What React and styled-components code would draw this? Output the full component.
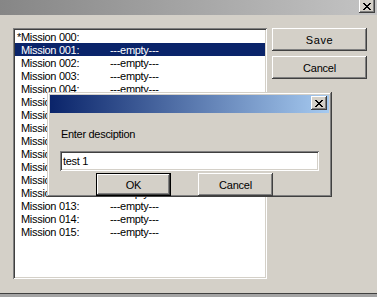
import React from 'react';
import styled, { createGlobalStyle } from 'styled-components';

const GlobalStyle = createGlobalStyle`
  html, body {
    margin: 0;
    padding: 0;
    background: #a4a4a4;
  }
  body {
    width: 377px;
    height: 297px;
    overflow: hidden;
    font-family: "Liberation Sans", Arial, sans-serif;
  }
`;

const raised = `
  box-shadow: inset -1px -1px #404040, inset 1px 1px #ffffff,
    inset -2px -2px #808080, inset 2px 2px #d4d0c8;
`;

const sunken = `
  box-shadow: inset 1px 1px #808080, inset -1px -1px #ffffff,
    inset 2px 2px #404040, inset -2px -2px #d4d0c8;
`;

const Window = styled.div`
  position: relative;
  width: 377px;
  height: 293px;
  background: #d4d0c8;
  border-bottom: 1px solid #404040;
  display: flex;
  flex-direction: column;
  font-size: 11px;
  letter-spacing: -0.3px;
  color: #000;
`;

const TitleBar = styled.div`
  height: 15px;
  flex: none;
  overflow: hidden;
  display: flex;
  align-items: flex-end;
  justify-content: flex-end;
  padding: 0 2px 2px 0;
  box-sizing: border-box;
  background: ${(p) => p.$active
    ? 'linear-gradient(90deg, #0a246a, #a6caf0)'
    : 'linear-gradient(90deg, #868686, #c4c4c4)'};
`;

const CloseBox = styled.button`
  width: 16px;
  height: 14px;
  flex: none;
  padding: 0;
  border: none;
  background: #d4d0c8;
  ${raised}
  display: flex;
  align-items: center;
  justify-content: center;
  margin-bottom: ${(p) => p.$offset || 0}px;
`;

const Body = styled.div`
  display: flex;
  gap: 5px;
  padding: 13px 0 0 13px;
`;

const ListBox = styled.div`
  width: 254px;
  height: 251px;
  box-sizing: border-box;
  background: #fff;
  ${sunken}
  padding: 2px;
`;

const Row = styled.div`
  height: 13px;
  line-height: 13px;
  padding: 1px 0 0 2px;
  box-sizing: border-box;
  display: flex;
  white-space: nowrap;
  background: ${(p) => (p.$selected ? '#0a246a' : 'transparent')};
  color: ${(p) => (p.$selected ? '#fff' : '#000')};
`;

const Mark = styled.span`
  width: 4px;
  flex: none;
`;

const Name = styled.span`
  width: 89px;
  flex: none;
`;

const SideButtons = styled.div`
  display: flex;
  flex-direction: column;
  gap: 5px;
`;

const Button = styled.button`
  width: ${(p) => p.$w || 95}px;
  height: 23px;
  padding: 0;
  border: none;
  background: #d4d0c8;
  font-family: "Liberation Sans", Arial, sans-serif;
  font-size: 11px;
  letter-spacing: ${(p) => (p.$spaced ? '0.6px' : '-0.2px')};
  color: #000;
  ${(p) => p.$default
    ? `box-shadow: inset 0 0 0 1px #000, inset -2px -2px #404040, inset 2px 2px #ffffff,
        inset -3px -3px #808080, inset 3px 3px #d4d0c8;`
    : raised}
`;

const Dialog = styled.div`
  position: absolute;
  left: 47px;
  top: 92px;
  width: 285px;
  height: 105px;
  box-sizing: border-box;
  padding: 3px;
  background: #d4d0c8;
  box-shadow: inset -1px -1px #404040, inset 1px 1px #d4d0c8,
    inset -2px -2px #808080, inset 2px 2px #ffffff;
  display: flex;
  flex-direction: column;
`;

const DialogTitle = styled(TitleBar)`
  height: 18px;
  align-items: center;
`;

const DialogBody = styled.div`
  padding: 13px 10px 0 10px;
  display: flex;
  flex-direction: column;
`;

const Label = styled.div`
  height: 16px;
  line-height: 16px;
  padding-left: 1px;
  margin-bottom: 9px;
`;

const Input = styled.div`
  height: 20px;
  box-sizing: border-box;
  background: #fff;
  ${sunken}
  padding: 3px 0 0 3px;
  line-height: 14px;
`;

const ButtonRow = styled.div`
  display: flex;
  gap: 27px;
  margin-top: 2px;
  padding-left: 36px;
`;

const CloseGlyph = () => {
  const rows = [
    [0, 1, 6, 7],
    [1, 2, 5, 6],
    [2, 3, 4, 5],
    [3, 4],
    [2, 3, 4, 5],
    [1, 2, 5, 6],
    [0, 1, 6, 7],
  ];
  return (
    <svg width="8" height="7" viewBox="0 0 8 7" shapeRendering="crispEdges">
      {rows.map((cols, y) =>
        cols.map((x) => <rect key={`${x}-${y}`} x={x} y={y} width="1" height="1" fill="#000" />)
      )}
    </svg>
  );
};

const missions = Array.from({ length: 16 }, (_, i) => `Mission ${String(i).padStart(3, '0')}:`);

export default function App() {
  return (
    <>
      <GlobalStyle />
      <Window>
        <TitleBar>
          <CloseBox>
            <CloseGlyph />
          </CloseBox>
        </TitleBar>
        <Body>
          <ListBox>
            {missions.map((name, i) => (
              <Row key={name} $selected={i === 1}>
                <Mark>{i === 0 ? '*' : ''}</Mark>
                <Name>{name}</Name>
                {i > 0 && <span>---empty---</span>}
              </Row>
            ))}
          </ListBox>
          <SideButtons>
            <Button $spaced>Save</Button>
            <Button>Cancel</Button>
          </SideButtons>
        </Body>

        <Dialog>
          <DialogTitle $active>
            <CloseBox>
              <CloseGlyph />
            </CloseBox>
          </DialogTitle>
          <DialogBody>
            <Label>Enter desciption</Label>
            <Input>test 1</Input>
            <ButtonRow>
              <Button $w={75} $default>OK</Button>
              <Button $w={75}>Cancel</Button>
            </ButtonRow>
          </DialogBody>
        </Dialog>
      </Window>
    </>
  );
}
